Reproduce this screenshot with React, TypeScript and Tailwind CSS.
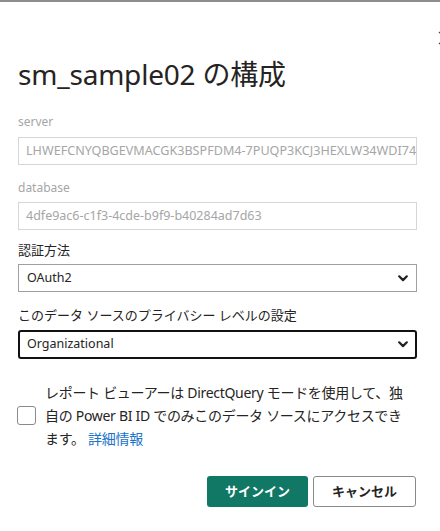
import React from "react";

const font = { fontFamily: '"Noto Sans", "Noto Sans CJK JP", sans-serif' };

function Chevron() {
  return (
    <svg width="10" height="7" viewBox="0 0 10 7" className="shrink-0">
      <path d="M1.2 1.3 L5 5.1 L8.8 1.3" fill="none" stroke="#222" strokeWidth="2.2" strokeLinecap="round" strokeLinejoin="round" />
    </svg>
  );
}

export default function App() {
  return (
    <div className="w-[440px] h-[531px] bg-white overflow-hidden relative border-t-2 border-[#8d8d8d]" style={font}>
      <svg className="absolute left-[438px] top-[29px]" width="14" height="14" viewBox="0 0 14 14">
        <path d="M1 1 L13 13 M13 1 L1 13" stroke="#444" strokeWidth="1.2" />
      </svg>
      <div className="pl-[18px] pr-[23px] pt-[52px]">
        <h1 className="text-[28px] leading-[40px] text-[#252423] tracking-[-0.2px]">sm_sample02 の構成</h1>

        <div className="mt-[20px] text-[12px] leading-[16px] text-[#a6a6a6]">server</div>
        <div className="mt-[7px] h-[28px] border border-[#d6d6d6] flex items-center px-[7px] overflow-hidden">
          <span className="text-[12.6px] text-[#a6a6a6] whitespace-nowrap">LHWEFCNYQBGEVMACGK3BSPFDM4-7PUQP3KCJ3HEXLW34WDI74I</span>
        </div>

        <div className="mt-[15px] text-[12px] leading-[16px] text-[#a6a6a6]">database</div>
        <div className="mt-[6px] h-[28px] border border-[#d6d6d6] flex items-center px-[7px] overflow-hidden">
          <span className="text-[12.5px] text-[#a6a6a6] whitespace-nowrap">4dfe9ac6-c1f3-4cde-b9f9-b40284ad7d63</span>
        </div>

        <div className="mt-[11px] text-[13px] leading-[18px] text-[#252423]">認証方法</div>
        <div className="mt-[5px] h-[28px] border border-[#a0a0a0] flex items-center justify-between pl-[8px] pr-[8px]">
          <span className="text-[12.5px] text-[#252423]">OAuth2</span>
          <Chevron />
        </div>

        <div className="mt-[14px] text-[13px] leading-[18px] text-[#252423]">このデータ ソースのプライバシー レベルの設定</div>
        <div className="mt-[6px] h-[29px] border-2 border-[#111] rounded-[3px] flex items-center justify-between pl-[7px] pr-[7px]">
          <span className="text-[12.5px] text-[#252423]">Organizational</span>
          <Chevron />
        </div>

        <div className="mt-[22px] flex items-center gap-[9px]">
          <div className="w-[19px] h-[19px] border border-[#8a8a8a] rounded-[3px] shrink-0 ml-[-1px]" />
          <p className="w-[368px] text-[14px] leading-[23px] text-[#252423] tracking-[-0.3px]">
            レポート ビューアーは DirectQuery モードを使用して、独自の Power BI ID でのみこのデータ ソースにアクセスできます。 <span className="text-[#1a73c9]">詳細情報</span>
          </p>
        </div>

        <div className="mt-[26px] flex justify-end gap-[5px] pr-[1px]">
          <button className="w-[101px] h-[31px] rounded-[3px] bg-[#117865] text-white text-[13px] font-bold">サインイン</button>
          <button className="w-[103px] h-[31px] rounded-[3px] border border-[#8a8a8a] bg-white text-[#252423] text-[13px] font-bold">キャンセル</button>
        </div>
      </div>
    </div>
  );
}
